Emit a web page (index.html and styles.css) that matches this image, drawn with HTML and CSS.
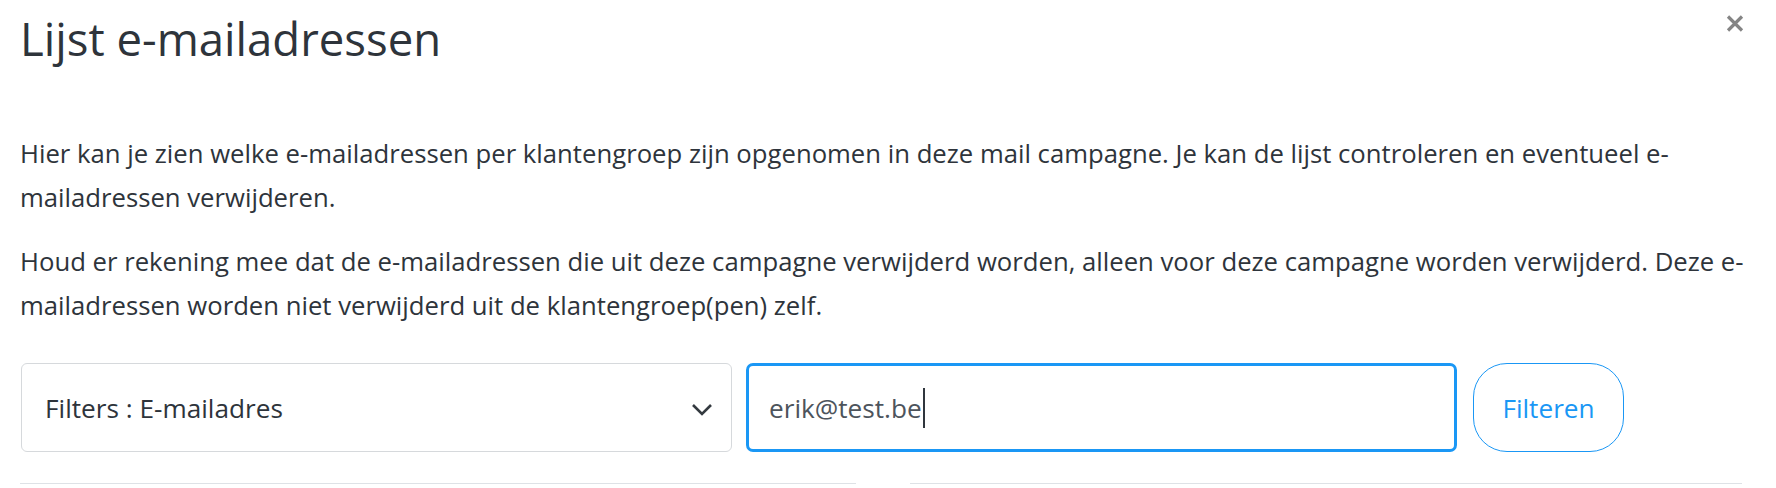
FILE: index.html
```html
<!DOCTYPE html>
<html lang="nl">
<head>
<meta charset="utf-8">
<title>Lijst e-mailadressen</title>
<link rel="stylesheet" href="styles.css">
</head>
<body>
<div class="modal">
  <div class="modal-header">
    <h1 class="modal-title">Lijst e-mailadressen</h1>
    <button class="close" aria-label="Sluiten">
      <svg width="18" height="19" viewBox="0 0 18 19"><path d="M2 2.5 L16 16.5 M16 2.5 L2 16.5" stroke="#858585" stroke-width="3.2" fill="none"/></svg>
    </button>
  </div>
  <div class="modal-body">
    <p class="intro">Hier kan je zien welke e-mailadressen per klantengroep zijn opgenomen in deze mail campagne. Je kan de lijst controleren en eventueel e-mailadressen verwijderen.</p>
    <p class="intro">Houd er rekening mee dat de e-mailadressen die uit deze campagne verwijderd worden, alleen voor deze campagne worden verwijderd. Deze e-mailadressen worden niet verwijderd uit de klantengroep(pen) zelf.</p>
    <div class="filter-row">
      <div class="select">
        <span>Filters : E-mailadres</span>
        <svg class="chevron" width="22" height="13" viewBox="0 0 22 13"><path d="M2 2 L11 11 L20 2" stroke="#343a40" stroke-width="2.6" fill="none"/></svg>
      </div>
      <div class="input"><span class="value">erik@test.be</span><span class="caret"></span></div>
      <button class="btn-filter">Filteren</button>
    </div>
    <div class="tables">
      <div class="table-card"></div>
      <div class="table-card"></div>
    </div>
  </div>
</div>
</body>
</html>
```

FILE: styles.css
```css
* { box-sizing: border-box; }
html, body { margin: 0; padding: 0; background: #ffffff; }
body {
  font-family: "Open Sans", "Noto Sans", sans-serif;
  color: #2e343b;
  width: 1776px;
  height: 488px;
  overflow: hidden;
}
.modal-header {
  display: flex;
  justify-content: space-between;
  align-items: flex-start;
  padding: 11px 32px 0 20px;
}
.modal-title {
  margin: 0;
  font-size: 45.5px;
  font-weight: 400;
  line-height: 55px;
  color: #2e343b;
}
.close {
  border: 0;
  background: none;
  padding: 0;
  margin-top: 3px;
  width: 18px;
  height: 19px;
  display: block;
}
.close svg { display: block; }
.modal-body {
  padding: 66px 14px 0 20px;
}
.intro {
  margin: 0 0 21px 0;
  font-size: 25.7px;
  line-height: 43.5px;
}
.filter-row {
  display: flex;
  gap: 14px;
  margin-top: 36px;
  height: 89px;
  padding-left: 1px;
}
.select {
  width: 711px;
  border: 1px solid #d6d9dc;
  border-radius: 6px;
  display: flex;
  align-items: center;
  justify-content: space-between;
  padding: 0 18px 0 23px;
  font-size: 26.2px;
  color: #2e343b;
}
.chevron { display: block; margin-top: 4px; }
.input {
  width: 711px;
  border: 3px solid #1a97f5;
  border-radius: 7px;
  display: flex;
  align-items: center;
  padding: 0 0 0 20px;
  font-size: 26.2px;
  color: #4d545c;
}
.caret {
  display: inline-block;
  width: 2px;
  height: 40px;
  background: #30363d;
  margin-left: 1px;
}
.btn-filter {
  width: 151px;
  margin-left: 2px;
  border: 1px solid #1a97f5;
  border-radius: 34px;
  background: #ffffff;
  color: #1a97f5;
  font-family: "Open Sans", "Noto Sans", sans-serif;
  font-size: 26.2px;
  padding: 0;
}
.tables {
  display: grid;
  grid-template-columns: 836px 832px;
  column-gap: 54px;
  margin-top: 31px;
}
.table-card {
  border-top: 1px solid #dee2e6;
  height: 10px;
}
```
